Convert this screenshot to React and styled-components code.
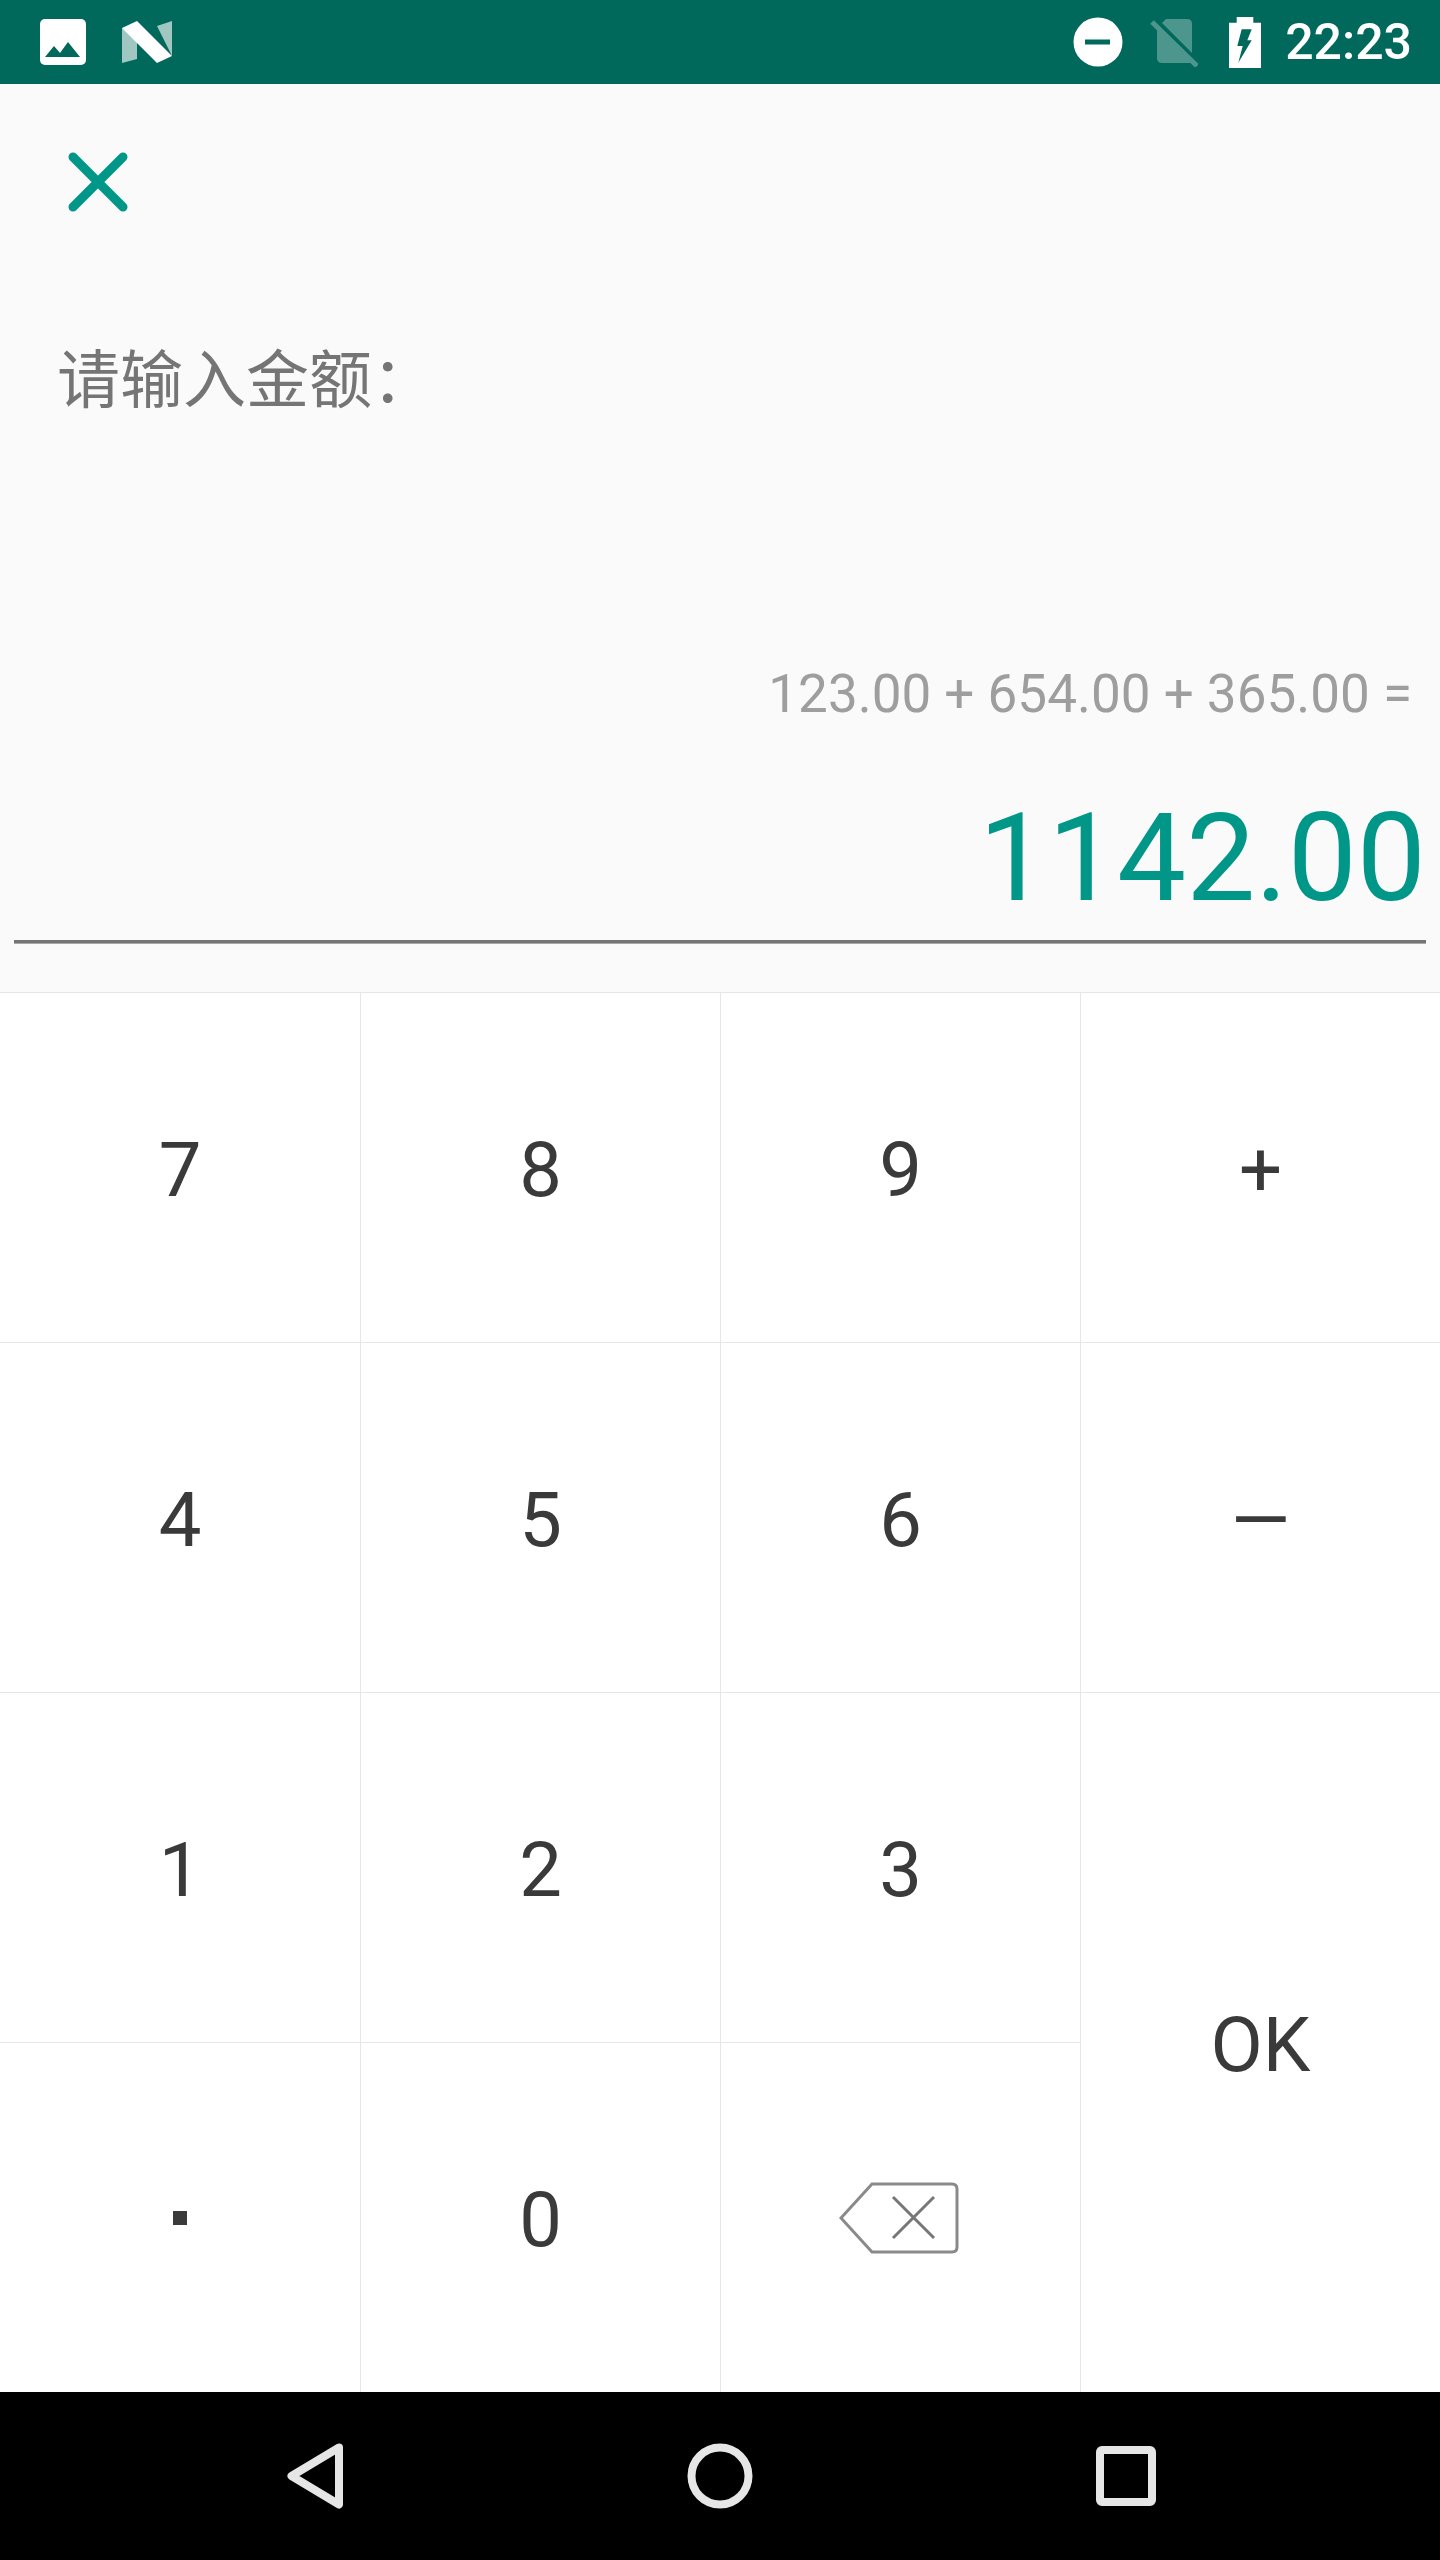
import React from "react";
import styled, { createGlobalStyle } from "styled-components";

const Global = createGlobalStyle`
  html, body { margin: 0; padding: 0; background: #fafafa; }
  * { box-sizing: border-box; }
`;

const Screen = styled.div`
  width: 1440px;
  height: 2560px;
  display: flex;
  flex-direction: column;
  font-family: Roboto, "Noto Sans CJK SC", sans-serif;
  background: #fafafa;
  overflow: hidden;
`;

const StatusBar = styled.div`
  height: 84px;
  flex: none;
  background: #00695c;
  display: flex;
  align-items: center;
  padding: 0 28px 0 40px;
`;
const StatusIcon = styled.svg`
  display: block;
  flex: none;
  margin-left: ${(p) => p.$gap || 0}px;
`;
const Spacer = styled.div`
  flex: 1;
`;
const Clock = styled.span`
  color: #fff;
  font-size: 50px;
  font-weight: 500;
  line-height: 84px;
  margin-left: 24px;
`;

const Display = styled.div`
  height: 908px;
  flex: none;
  display: flex;
  flex-direction: column;
  padding: 0 14px;
`;
const CloseRow = styled.div`
  height: 257px;
  padding: 67px 0 0 53px;
  flex: none;
`;
const CloseIcon = styled.svg`
  display: block;
`;
const Prompt = styled.div`
  font-size: 63px;
  line-height: 80px;
  color: #757575;
  margin-left: 43px;
  height: 80px;
  flex: none;
`;
const Formula = styled.div`
  margin-top: 241px;
  font-size: 53px;
  line-height: 64px;
  color: #9e9e9e;
  text-align: right;
  padding-right: 14px;
  flex: none;
`;
const Amount = styled.div`
  margin-top: 62px;
  font-size: 123px;
  line-height: 140px;
  color: #009688;
  text-align: right;
  flex: none;
`;
const Rule = styled.div`
  margin-top: 12px;
  height: 4px;
  flex: none;
  background: #757575;
  border-bottom: 1px solid #a8a8a8;
`;

const Keypad = styled.div`
  height: 1400px;
  flex: none;
  display: grid;
  grid-template-columns: repeat(4, 360px);
  grid-template-rows: repeat(4, 350px);
  background: #fff;
`;
const Key = styled.div`
  display: flex;
  align-items: center;
  justify-content: center;
  font-size: 76px;
  color: #3a3a3a;
  padding-top: ${(p) => (p.$icon ? 0 : 4)}px;
  border-top: 1px solid #e6e6e6;
  border-left: ${(p) => (p.$first ? "none" : "1px solid #e6e6e6")};
  ${(p) => p.$tall && "grid-row: span 2;"}
`;
const Dot = styled.span`
  display: block;
  width: 14px;
  height: 14px;
  background: #3a3a3a;
`;

const NavBar = styled.div`
  height: 168px;
  flex: none;
  background: #000;
  display: flex;
  align-items: center;
  justify-content: space-between;
  padding: 0 284px 0 287px;
`;

const keys = ["7", "8", "9", "+", "4", "5", "6", "—", "1", "2", "3"];

export default function App() {
  return (
    <Screen>
      <Global />
      <StatusBar>
        <StatusIcon width="46" height="46" viewBox="0 0 46 46">
          <rect width="46" height="46" rx="5" fill="#fff" />
          <path d="M5 38 L14 27 L20 34 L28 23 L40 38 Z" fill="#00695c" />
        </StatusIcon>
        <StatusIcon $gap={36} width="51" height="42" viewBox="0 0 51 42">
          <path d="M0 7 L15 13 V38 L0 42 Z" fill="#fff" opacity=".63" />
          <path d="M35 5 L50 0 V35 Z" fill="#fff" opacity=".63" />
          <path d="M0 7 L15 0 L50 35 L35 42 Z" fill="#fff" />
          <path d="M0 7 L15 22 V13 Z" fill="#fff" opacity=".3" />
        </StatusIcon>
        <Spacer />
        <StatusIcon width="50" height="50" viewBox="0 0 50 50">
          <circle cx="25" cy="25" r="24.5" fill="#fff" />
          <rect x="12" y="22.5" width="25" height="5" fill="#00695c" />
        </StatusIcon>
        <StatusIcon $gap={27} width="48" height="50" viewBox="0 0 48 50">
          <g opacity=".3" fill="#fff">
            <path d="M12 6 L16 2 H37 Q42 2 42 7 V36 Z" />
            <path d="M9 9 L42 42 V46 H12 Q7 46 7 41 V11 Z" />
            <path d="M2 5 L47 49" stroke="#fff" strokeWidth="5" />
          </g>
        </StatusIcon>
        <StatusIcon $gap={31} width="32" height="51" viewBox="0 0 32 51">
          <path
            fillRule="evenodd"
            d="M7.7 0 H24.3 V5.7 H32 V51 H0 V5.7 H7.7 Z M12.7 12.3 H22.7 L18.3 23.3 H22.7 L9.3 45.7 L13.7 29 H8.3 Z"
            fill="#fff"
          />
        </StatusIcon>
        <Clock>22:23</Clock>
      </StatusBar>

      <Display>
        <CloseRow>
          <CloseIcon width="62" height="62" viewBox="0 0 62 62">
            <path d="M6 6 L56 56 M56 6 L6 56" stroke="#009688" strokeWidth="9" strokeLinecap="round" />
          </CloseIcon>
        </CloseRow>
        <Prompt>请输入金额：</Prompt>
        <Formula>123.00 + 654.00 + 365.00 =</Formula>
        <Amount>1142.00</Amount>
        <Rule />
      </Display>

      <Keypad>
        {keys.map((k, i) => (
          <Key key={i} $first={i % 4 === 0}>
            {k}
          </Key>
        ))}
        <Key $tall>OK</Key>
        <Key $first $icon>
          <Dot />
        </Key>
        <Key>0</Key>
        <Key $icon>
          <svg width="124" height="72" viewBox="0 0 124 72">
            <path
              d="M2 36 L33 2 H113 Q118 2 118 7 V65 Q118 70 113 70 H33 Z"
              fill="none"
              stroke="#8a8a8a"
              strokeWidth="3"
            />
            <path d="M54 15 L95 56 M95 15 L54 56" stroke="#777" strokeWidth="3" />
          </svg>
        </Key>
      </Keypad>

      <NavBar>
        <svg width="57" height="66" viewBox="0 0 57 66">
          <path
            d="M52 4.5 L4.5 33 L52 61.5 Z"
            fill="none"
            stroke="#e6e6e6"
            strokeWidth="8"
            strokeLinejoin="round"
          />
        </svg>
        <svg width="66" height="66" viewBox="0 0 66 66">
          <circle cx="33" cy="33" r="28.5" fill="none" stroke="#e6e6e6" strokeWidth="8" />
        </svg>
        <svg width="60" height="60" viewBox="0 0 60 60">
          <rect x="4" y="4" width="52" height="52" rx="2" fill="none" stroke="#e6e6e6" strokeWidth="8" />
        </svg>
      </NavBar>
    </Screen>
  );
}
